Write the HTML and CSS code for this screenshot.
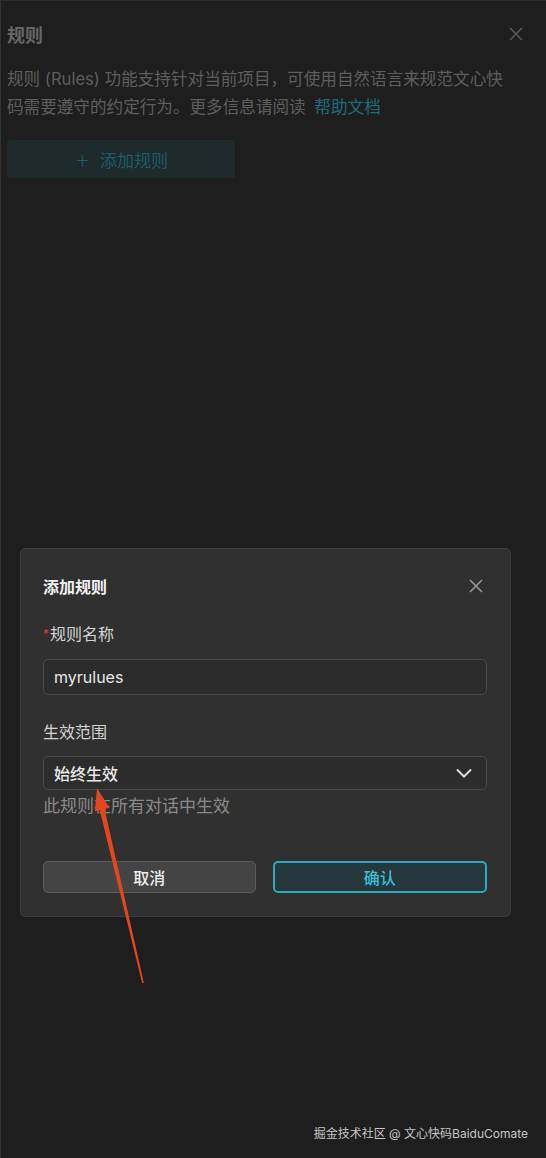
FILE: index.html
```html
<!DOCTYPE html>
<html lang="zh-CN">
<head>
    <meta charset="UTF-8">
    <meta name="viewport" content="width=device-width, initial-scale=1.0">
    <title>规则</title>
    <link rel="stylesheet" href="styles.css">
</head>
<body>
    <div class="page">
        <header class="panel-head">
            <h1>规则</h1>
            <svg class="close dim" width="14" height="14" viewBox="0 0 14 14"><path d="M1 1L13 13M13 1L1 13" /></svg>
        </header>
        <p class="desc">规则 (Rules) 功能支持针对当前项目，可使用自然语言来规范文心快码需要遵守的约定行为。更多信息请阅读 <a href="#">帮助文档</a></p>
        <button class="add-btn"><span class="plus">+</span>添加规则</button>
    </div>

    <!-- Add rule dialog -->
    <div class="modal">
        <div class="modal-head">
            <h2>添加规则</h2>
            <svg class="close" width="14" height="14" viewBox="0 0 14 14"><path d="M1 1L13 13M13 1L1 13" /></svg>
        </div>
        <label class="field-label"><span class="req">*</span>规则名称</label>
        <div class="input">myrulues</div>
        <label class="field-label second">生效范围</label>
        <div class="select">
            <span>始终生效</span>
            <svg width="16" height="10" viewBox="0 0 16 10"><path d="M1 1.5L8 8.5L15 1.5" /></svg>
        </div>
        <p class="hint">此规则在所有对话中生效</p>
        <div class="actions">
            <button class="btn cancel">取消</button>
            <button class="btn confirm">确认</button>
        </div>
    </div>

    <svg class="arrow" width="546" height="1158" viewBox="0 0 546 1158">
        <polygon points="96,787 108.5,807 103.5,807.8 142.8,981.8 141.2,982.2 98.7,809 93.8,810.5" />
    </svg>

    <div class="watermark">掘金技术社区 @ 文心快码BaiduComate</div>
</body>
</html>
```

FILE: styles.css
```css
html {
    background-color: #1e1e1e;
}
body {
    margin: 0;
    min-height: 1158px;
    box-sizing: border-box;
    border-left: 1px solid #333;
    border-top: 1px solid #2c2c2c;
    font-family: Inter, "Noto Sans CJK SC", sans-serif;
    color: #d6d6d6;
    position: relative;
}
.page {
    padding: 0 31px 0 6px;
}
.panel-head {
    display: flex;
    justify-content: space-between;
    align-items: center;
    height: 40px;
    padding-top: 13px;
    margin-right: -8px;
}
.panel-head h1 {
    margin: 0;
    font-size: 18px;
    font-weight: 700;
    color: #666;
}
.close path {
    stroke: #9a9a9a;
    stroke-width: 1.5;
    fill: none;
}
.close.dim path {
    stroke: #5a5a5a;
}
.desc {
    max-width: 500px;
    margin: 11px 0 0;
    font-size: 16.6px;
    line-height: 28px;
    color: #5e5e5e;
}
.desc a {
    margin-left: 4px;
    color: #1e6c7b;
    text-decoration: none;
}
.add-btn {
    display: flex;
    align-items: center;
    justify-content: center;
    width: 228px;
    height: 38px;
    margin-top: 19px;
    background-color: #1f2a2c;
    border: none;
    border-radius: 3px;
    color: #1d5c68;
    font-family: inherit;
    font-size: 17px;
}
.plus {
    font-size: 26px;
    font-weight: 200;
    margin-right: 9px;
    line-height: 1;
}

.modal {
    position: absolute;
    top: 547px;
    left: 19px;
    width: 491px;
    box-sizing: border-box;
    padding: 25px 23px 23px 22px;
    background-color: #303030;
    border: 1px solid #3c3c3c;
    border-radius: 5px;
}
.modal-head {
    display: flex;
    justify-content: space-between;
    align-items: center;
    height: 24px;
    padding-right: 4px;
}
.modal-head h2 {
    margin: 0;
    font-size: 16px;
    font-weight: 700;
    color: #f2f2f2;
}
.field-label {
    display: block;
    margin-top: 24px;
    font-size: 16px;
    line-height: 24px;
    color: #d4d4d4;
}
.field-label.second {
    margin-top: 25px;
}
.req {
    color: #e0384b;
    font-size: 12px;
    vertical-align: top;
    margin-right: 1px;
}
.input, .select {
    box-sizing: border-box;
    height: 36px;
    margin-top: 13px;
    padding: 0 10px;
    display: flex;
    align-items: center;
    background-color: #2c2c2c;
    border: 1px solid #4a4a4a;
    border-radius: 5px;
    font-size: 16px;
    color: #e8e8e8;
}
.select {
    height: 34px;
    margin-top: 12px;
    justify-content: space-between;
    font-weight: 500;
    padding-right: 14px;
}
.select path {
    stroke: #dcdcdc;
    stroke-width: 2;
    fill: none;
}
.hint {
    margin: 4px 0 0;
    font-size: 17px;
    line-height: 24px;
    color: #8a8a8a;
}
.actions {
    display: flex;
    gap: 17px;
    margin-top: 43px;
}
.btn {
    flex: 1;
    height: 32px;
    border-radius: 5px;
    font-family: inherit;
    font-size: 16px;
    font-weight: 500;
}
.cancel {
    background-color: #444;
    border: 1px solid #5c5c5c;
    color: #ececec;
}
.confirm {
    background-color: #27383c;
    border: 2px solid #2aa9c0;
    color: #3cbfd8;
}

.arrow {
    position: absolute;
    top: 0;
    left: 0;
    pointer-events: none;
}
.arrow polygon {
    fill: #e6461e;
}
.watermark {
    position: absolute;
    right: 18px;
    top: 1124px;
    font-size: 12px;
    line-height: 18px;
    color: #c6c6c6;
}
```
